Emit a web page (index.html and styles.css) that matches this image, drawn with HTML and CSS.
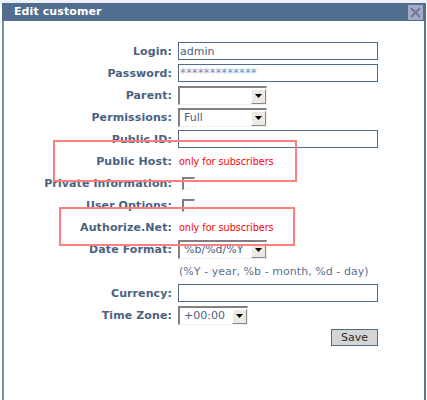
FILE: index.html
```html
<!DOCTYPE html>
<html>
<head>
<meta charset="utf-8">
<title>Edit customer</title>
<link rel="stylesheet" href="styles.css">
</head>
<body>
<div class="dialog">
  <div class="titlebar">
    <span class="title">Edit customer</span>
    <span class="close" title="Close">
      <svg width="15" height="15" viewBox="0 0 15 15"><rect x="0" y="0" width="15" height="15" fill="#a4abc9"/><path d="M3 3 L12 12 M12 3 L3 12" stroke="#6f7794" stroke-width="2" fill="none"/></svg>
    </span>
  </div>
  <form class="form">
    <label class="lbl">Login:</label>
    <div class="fld"><input class="txt" type="text" value="admin"></div>

    <label class="lbl">Password:</label>
    <div class="fld"><input class="txt pw" type="text" value="*************"></div>

    <label class="lbl">Parent:</label>
    <div class="fld"><span class="sel w89"><span class="val"></span><span class="btn"><svg width="7" height="4" viewBox="0 0 7 4"><polygon points="0,0 7,0 3.5,4" fill="#000"/></svg></span></span></div>

    <label class="lbl">Permissions:</label>
    <div class="fld"><span class="sel w89"><span class="val">Full</span><span class="btn"><svg width="7" height="4" viewBox="0 0 7 4"><polygon points="0,0 7,0 3.5,4" fill="#000"/></svg></span></span></div>

    <label class="lbl">Public ID:</label>
    <div class="fld"><input class="txt" type="text" value=""></div>

    <label class="lbl">Public Host:</label>
    <div class="fld"><span class="note">only for subscribers</span></div>

    <label class="lbl">Private Information:</label>
    <div class="fld"><span class="chk"></span></div>

    <label class="lbl">User Options:</label>
    <div class="fld"><span class="chk"></span></div>

    <label class="lbl">Authorize.Net:</label>
    <div class="fld"><span class="note">only for subscribers</span></div>

    <label class="lbl">Date Format:</label>
    <div class="fld"><span class="sel w89"><span class="val">%b/%d/%Y</span><span class="btn"><svg width="7" height="4" viewBox="0 0 7 4"><polygon points="0,0 7,0 3.5,4" fill="#000"/></svg></span></span></div>

    <span class="lbl"></span>
    <div class="fld"><span class="hint">(%Y - year, %b - month, %d - day)</span></div>

    <label class="lbl">Currency:</label>
    <div class="fld"><input class="txt" type="text" value=""></div>

    <label class="lbl">Time Zone:</label>
    <div class="fld"><span class="sel w70"><span class="val">+00:00</span><span class="btn"><svg width="7" height="4" viewBox="0 0 7 4"><polygon points="0,0 7,0 3.5,4" fill="#000"/></svg></span></span></div>

    <span class="lbl"></span>
    <div class="fld end"><button class="save" type="button">Save</button></div>
  </form>
  <div class="mark mark1"></div>
  <div class="mark mark2"></div>
</div>
</body>
</html>
```
FILE: styles.css
```css
html, body {
  margin: 0;
  padding: 0;
  background: #ffffff;
}
body {
  font-family: "DejaVu Sans", Verdana, sans-serif;
  border-top: 3px solid #eef1f5;
}
.dialog {
  position: relative;
  margin: 0 1px 0 2px;
  height: 397px;
  border-left: 2px solid #7390b0;
  border-right: 2px solid #5a7596;
  box-sizing: border-box;
  background: #ffffff;
}
.titlebar {
  margin: 0 -2px;
  height: 18px;
  background: #516d8f;
  display: flex;
  align-items: center;
  justify-content: space-between;
  padding: 0 3px 0 12px;
}
.title {
  color: #ffffff;
  font-weight: bold;
  font-size: 11px;
  letter-spacing: 0.1px;
  line-height: 18px;
}
.close {
  display: flex;
  width: 15px;
  height: 15px;
}
.form {
  display: grid;
  grid-template-columns: 168px 200px;
  grid-auto-rows: 22px;
  column-gap: 6px;
  padding-top: 19px;
  margin: 0;
}
.lbl {
  display: flex;
  align-items: center;
  justify-content: flex-end;
  font-weight: bold;
  font-size: 11px;
  letter-spacing: 0.1px;
  color: #4a6282;
  white-space: nowrap;
}
.fld {
  display: flex;
  align-items: center;
}
.fld.end {
  justify-content: flex-end;
}
.txt {
  box-sizing: border-box;
  width: 200px;
  height: 18px;
  margin: 0;
  border: 1px solid #4f6a8a;
  padding: 0 1px;
  font-family: "DejaVu Sans", Verdana, sans-serif;
  font-size: 11px;
  color: #4a6282;
  background: #ffffff;
  outline: none;
}
.txt.pw {
  font-size: 12px;
  letter-spacing: -0.1px;
  color: #7d93b0;
}
.sel {
  box-sizing: border-box;
  display: flex;
  align-items: flex-end;
  justify-content: space-between;
  height: 19px;
  border-top: 2px solid #808080;
  border-left: 2px solid #808080;
  border-right: 1px solid #f1f0ec;
  border-bottom: 1px solid #f1f0ec;
  background: #ffffff;
}
.sel.w89 { width: 89px; }
.sel.w70 { width: 70px; }
.val {
  align-self: center;
  padding-left: 4px;
  font-size: 11px;
  color: #4a6282;
  white-space: nowrap;
}
.btn {
  box-sizing: border-box;
  width: 15px;
  height: 15px;
  background: #ebe9e2;
  border-right: 1px solid #8a8a8a;
  border-bottom: 1px solid #8a8a8a;
  border-top: 1px solid #ffffff;
  border-left: 1px solid #ffffff;
  display: flex;
  align-items: center;
  justify-content: center;
}
.chk {
  box-sizing: border-box;
  width: 13px;
  height: 13px;
  margin-left: 4px;
  border-top: 2px solid #808080;
  border-left: 2px solid #808080;
  border-right: 1px solid #f3f3f3;
  border-bottom: 1px solid #f3f3f3;
  background: #fcfcfc;
}
.note {
  font-size: 9.6px;
  color: #ff0000;
  white-space: nowrap;
  padding-left: 1px;
}
.hint {
  font-size: 11px;
  letter-spacing: 0.05px;
  color: #5a7090;
  white-space: nowrap;
  padding-left: 1px;
}
.save {
  box-sizing: border-box;
  width: 47px;
  height: 17px;
  margin: 0;
  padding: 0;
  border: 1px solid #4f6a8a;
  background: #d4d4d4;
  font-family: "DejaVu Sans", Verdana, sans-serif;
  font-size: 11px;
  color: #2e2e2e;
}
.mark {
  position: absolute;
  box-sizing: border-box;
  border: 2px solid #ff7f7f;
}
.mark1 {
  left: 49px;
  top: 137px;
  width: 244px;
  height: 42px;
}
.mark2 {
  left: 55px;
  top: 204px;
  width: 236px;
  height: 39px;
}
```
